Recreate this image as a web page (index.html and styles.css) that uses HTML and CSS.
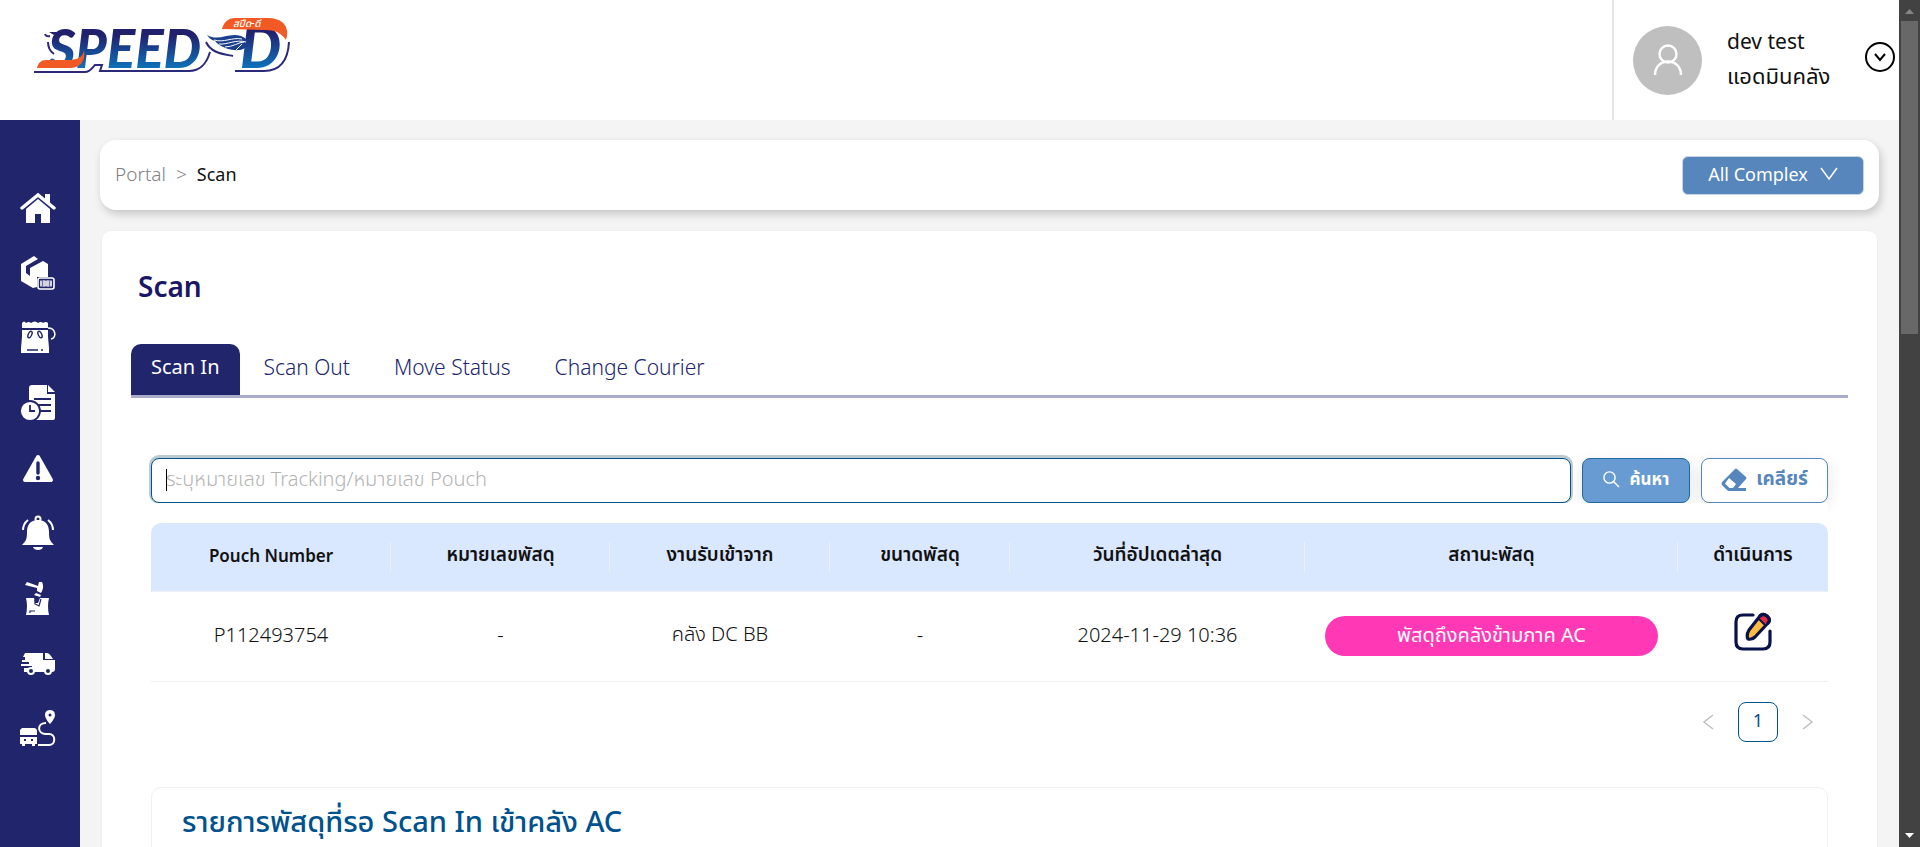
FILE: index.html
```html
<!DOCTYPE html>
<html lang="th">
<head>
<meta charset="utf-8">
<title>Scan</title>
<link rel="stylesheet" href="styles.css">
</head>
<body>
<div class="app">
  <header class="header">
    <a class="logo" href="#" aria-label="Speed-D">
      <svg width="270" height="86" viewBox="0 0 270 86">
        <defs>
          <linearGradient id="blue" x1="0" y1="0" x2="0" y2="1">
            <stop offset="0.3" stop-color="#21206d"/><stop offset="0.85" stop-color="#0e76bd"/>
          </linearGradient>
        </defs>
        <path d="M0 72H40L51 72C56 72 58 68 61 65H68L66 71H155C168 71 173 62 176 52" fill="none" stroke="#2b2a78" stroke-width="2"/>
        <path d="M11 34q1 3 5 2M14 42q0 8 6 12M172 42c5 11 17 12 27 14M201 71H230C246 71 254 60 255 42" fill="none" stroke="#2b2a78" stroke-width="2"/>
        <text class="logo-word" x="14" y="68" fill="url(#blue)">SPEED</text>
        <path d="M15 32h12l-7 3z" fill="#21206d"/>
        <path d="M3 68C4 63 7 60 12 60H34C42 60 49 58 50 50C52 61 46 68 36 68Z" fill="#f15a24"/>
        <text class="logo-word logo-d" x="206" y="68" fill="url(#blue)">D</text>
        <path d="M188 29C190 22 194 18 201 18H234C250 18 256 28 252 40C248 34 242 30 232 30Z" fill="#f15a24"/>
        <path d="M173 35C185 42 194 32 207 36C216 39 216 48 206 50C196 51 186 47 181 41C177 40 175 38 173 35Z" fill="#1b3f8d"/>
        <path d="M180 40C190 43 198 37 208 39M185 44C193 45 202 39 212 42M191 47C199 47 205 42 210 42M202 50l6-6" fill="none" stroke="#fff" stroke-width="1"/>
        <text class="logo-sub" x="199" y="27" fill="#fff">สปีด-ดี</text>
      </svg>
    </a>
    <div class="user">
      <span class="avatar">
        <svg width="32" height="32" viewBox="0 0 32 32" fill="none" stroke="#fff" stroke-width="2.4"><circle cx="16" cy="10" r="8.5"/><path d="M3 31C3 13 29 13 29 31"/></svg>
      </span>
      <div class="user-text"><span>dev test</span><span class="role">แอดมินคลัง</span></div>
      <button class="user-toggle" aria-label="เมนูผู้ใช้">
        <svg width="30" height="30" viewBox="0 0 30 30" fill="none" stroke="#000" stroke-width="2"><circle cx="15" cy="15" r="14"/><path d="M10 12l5 6 5-6"/></svg>
      </button>
    </div>
  </header>
  <div class="body">
    <nav class="sidebar">
      <a href="#" aria-label="Home"><svg width="36" height="36" viewBox="0 0 36 36"><path d="M25 4h5v10l-5-5z" fill="#fff"/><path d="M2 18L18 5l16 13" fill="none" stroke="#fff" stroke-width="3.4" stroke-linecap="round"/><path d="M6 19L18 9l12 10v14h-9v-9h-6v9H6z" fill="#fff"/></svg></a>
      <a href="#" aria-label="Parcel"><svg width="36" height="36" viewBox="0 0 36 36" fill="#fff"><path d="M1 9L14 1l4 3L6 11v7l4 3v-8L23 6l5 3v13H17v10L13 33 1 26z"/><rect x="18" y="23" width="16" height="11" rx="2" fill="none" stroke="#fff" stroke-width="1.6"/><path d="M21 26v5M24 25.500v6M26 26v5M28 25.500v6M31 26v5" stroke="#fff" stroke-width="1.400"/><path d="M20 25h12v7H20z" fill="#fff" opacity=".35"/></svg></a>
      <a href="#" aria-label="Pouch"><svg width="36" height="36" viewBox="0 0 36 36"><path d="M2 3q2-3 4 0 3-2 5 0 4-3 7 0 3-2 5 0 3-2 5 0v5H2zM2 10h26v7l1 11v5H1v-5l1-11z" fill="#fff"/><path d="M28 8c8 0 9 10 3 11" fill="none" stroke="#fff" stroke-width="1.600"/><g fill="none" stroke="#21266c" stroke-width="1.400"><ellipse cx="10" cy="14.500" rx="1.700" ry="3.500" transform="rotate(25 10 14.500)"/><ellipse cx="20" cy="14.500" rx="1.700" ry="3.500" transform="rotate(-25 20 14.500)"/><path d="M7 30h11M21 30h2"/></g></svg></a>
      <a href="#" aria-label="History"><svg width="36" height="36" viewBox="0 0 36 36"><path d="M12 0h15v9h8v24q0 2-2 2H9V3q0-3 3-3zM28 0l7 7h-7z" fill="#fff"/><path d="M14 14h17M17 20h14M17 26h14" stroke="#21266c" stroke-width="1.800"/><circle cx="10" cy="26" r="10" fill="#fff" stroke="#21266c" stroke-width="1.800"/><path d="M10 20v6h5" fill="none" stroke="#21266c" stroke-width="1.800"/></svg></a>
      <a href="#" aria-label="Warning"><svg width="36" height="36" viewBox="0 0 36 36"><path d="M18 7l13 23H5z" fill="#fff" stroke="#fff" stroke-width="4" stroke-linejoin="round"/><path d="M18 13v10" stroke="#21266c" stroke-width="3.400" stroke-linecap="round"/><circle cx="18" cy="28" r="2.200" fill="#21266c"/></svg></a>
      <a href="#" aria-label="Notifications"><svg width="36" height="36" viewBox="0 0 36 36"><circle cx="18" cy="4" r="2.500" fill="none" stroke="#fff" stroke-width="2"/><path d="M18 5c8 0 11 5 11 12 0 7 1 9 5 13H2c4-4 5-6 5-13C7 10 10 5 18 5zM13 32h10q-1 3-5 3t-5-3z" fill="#fff"/><path d="M8 5q-5 4-5 10M28 5q5 4 5 10" fill="none" stroke="#fff" stroke-width="2"/></svg></a>
      <a href="#" aria-label="Damaged parcel"><svg width="36" height="36" viewBox="0 0 36 36" fill="#fff"><path d="M7 2l11 4 1-4 3 0c2 4 1 8-1 11l-4-2 0-3L5 5zM16 13l5 2-1 2-6-2zM6 18h8l1 5h3l2-5h9q-2 8 0 17H6q2-9 0-17z"/><path d="M15 20v4l4 2 2-7M10 33v-2h5" fill="none" stroke="#21266c" stroke-width="1.200"/></svg></a>
      <a href="#" aria-label="Delivery"><svg width="36" height="36" viewBox="0 0 36 36"><path d="M5 8h18v7h12v9q0 3-3 3H4v-4h8v-2H1v-2h8v-2H2v-2h3V12H3zM25 8h2q2 0 4 3l2 3h-8z" fill="#fff"/><circle cx="11" cy="26" r="3" fill="#21266c" stroke="#fff" stroke-width="2"/><circle cx="28" cy="26" r="3" fill="#21266c" stroke="#fff" stroke-width="2"/></svg></a>
      <a href="#" aria-label="Routes"><svg width="36" height="36" viewBox="0 0 36 36"><path d="M30 0c4 0 5 3 5 5 0 4-5 9-5 9s-5-5-5-9c0-2 1-5 5-5zM2 18h13l2 2v5H0v-5zM0 27h17v7h-2v2h-3v-2H5v2H2v-2H0z" fill="#fff"/><circle cx="30" cy="5" r="1.500" fill="#21266c"/><path d="M4 30h2M11 30h2" stroke="#21266c" stroke-width="2"/><path d="M26 13c-9 0-9 10-1 11h4c7 0 7 11 0 11H18" fill="none" stroke="#fff" stroke-width="2"/></svg></a>
    </nav>
    <main class="content">
      <section class="topbar">
        <nav class="crumbs" aria-label="Breadcrumb"><a href="#">Portal</a><span>&gt;</span><span class="current">Scan</span></nav>
        <button class="complex">All Complex
          <svg width="18" height="14" viewBox="0 0 18 14" fill="none" stroke="#fff" stroke-width="1.500"><path d="M1 1l8 11 8-11"/></svg>
        </button>
      </section>
      <section class="panel">
        <h1>Scan</h1>
        <div class="tabs" role="tablist">
          <button class="tab active" role="tab" aria-selected="true">Scan In</button>
          <button class="tab" role="tab">Scan Out</button>
          <button class="tab" role="tab">Move Status</button>
          <button class="tab" role="tab">Change Courier</button>
        </div>
        <div class="pane">
          <form class="search">
            <div class="field"><input type="text" aria-label="ระบุหมายเลข Tracking/หมายเลข Pouch" placeholder="ระบุหมายเลข Tracking/หมายเลข Pouch"></div>
            <button class="btn primary" type="button">
              <svg width="17" height="17" viewBox="0 0 17 17" fill="none" stroke="#fff" stroke-width="1.400"><circle cx="6.500" cy="6.500" r="5.600"/><path d="M10.500 10.500L16 16"/></svg>
              ค้นหา</button>
            <button class="btn clear" type="reset">
              <svg width="26" height="24" viewBox="0 0 26 24"><path d="M14 1q1-1 2 0l9 8q1 1 0 2L17 20h8v3H8q-1 0-2-1L1 17q-1-1 0-3zM8 10l-4 5.500L8.500 20H12l3-4z" fill="#5686bc" fill-rule="evenodd"/></svg>
              เคลียร์</button>
          </form>
          <div class="table-wrap">
            <table>
              <colgroup><col class="c1"><col class="c2"><col class="c3"><col class="c4"><col class="c5"><col class="c6"><col class="c7"></colgroup>
              <thead><tr><th class="latin">Pouch Number</th><th>หมายเลขพัสดุ</th><th>งานรับเข้าจาก</th><th>ขนาดพัสดุ</th><th>วันที่อัปเดตล่าสุด</th><th>สถานะพัสดุ</th><th>ดำเนินการ</th></tr></thead>
              <tbody><tr><td>P112493754</td><td>-</td><td>คลัง DC BB</td><td>-</td><td>2024-11-29 10:36</td>
                <td><span class="pill">พัสดุถึงคลังข้ามภาค AC</span></td>
                <td><button class="edit" aria-label="แก้ไข"><svg width="40" height="40" viewBox="0 0 40 40" fill="none" stroke="#07114a" stroke-width="3.200" stroke-linecap="round"><path d="M20 4H10Q3 4 3 11V31Q3 38 10 38H30Q37 38 37 31V20"/><path d="M27 5q3-3 7 0 4 4 1 7L22 26q-3 3-7 2-2-4 1-9z" fill="#fdbb3f" stroke-linejoin="round"/><path d="M28 6q3-2 5 0 3 3 1 6l-2 2-6-6z" fill="#ea2b3d" stroke="none"/><path d="M26 8l6 6" stroke-width="2"/><path d="M27 5q3-3 7 0 4 4 1 7" /></svg></button></td></tr></tbody>
            </table>
          </div>
          <nav class="pager" aria-label="Pagination">
            <button aria-label="Previous"><svg width="12" height="18" viewBox="0 0 12 18"><path d="M11 2L2 9l9 7"/></svg></button>
            <button class="page">1</button>
            <button aria-label="Next"><svg width="12" height="18" viewBox="0 0 12 18"><path d="M1 2l9 7-9 7"/></svg></button>
          </nav>
          <section class="waiting"><h2>รายการพัสดุที่รอ Scan In เข้าคลัง AC</h2></section>
        </div>
      </section>
    </main>
  </div>
</div>
<div class="scrollbar" aria-hidden="true">
  <svg width="9" height="21" viewBox="0 0 9 21"><path d="M0 14l4.500-5L9 14z" fill="#868686"/></svg>
  <div class="thumb"></div>
  <svg width="9" height="21" viewBox="0 0 9 21"><path d="M0 7h9l-4.500 5z" fill="#fff"/></svg>
</div>
</body>
</html>
```
FILE: styles.css
```css
* { box-sizing: border-box; }
body {
  margin: 0;
  display: flex;
  height: 100vh;
  overflow: hidden;
  background: #f4f4f4;
  color: #111;
  font-family: "Noto Sans", "Noto Sans Thai", sans-serif;
  font-size: 18px;
}
button, input { font: inherit; color: inherit; }
button { cursor: pointer; padding: 0; border: 0; background: none; }
a { color: inherit; text-decoration: none; }
svg { display: block; flex: none; }
.app { flex: 1; min-width: 0; display: flex; flex-direction: column; overflow: hidden; }
.header { height: 120px; flex: none; display: flex; justify-content: space-between; background: #fff; }
.logo { padding-left: 34px; }
.logo-word { font: italic 900 53px Lato, sans-serif; stroke: #fff; stroke-width: 4px; paint-order: stroke; }
.logo-d { font-size: 58px; }
.logo-sub { font: italic 500 10px "Noto Sans", "Noto Sans Thai", sans-serif; }
.user { width: 287px; display: flex; align-items: center; border-left: 2px solid #e4e4ec; padding: 0 4px 0 19px; }
.avatar { width: 69px; height: 69px; display: grid; place-items: center; border-radius: 50%; background: #bfbfbf; }
.user-text { margin: 0 0 4px 25px; flex: 1; display: flex; flex-direction: column; font-size: 21px; line-height: 34px; white-space: nowrap; }
.role { font-size: 22px; }
.user-toggle { margin-bottom: 6px; }
.body { flex: 1; min-height: 0; display: flex; }
.sidebar { width: 80px; flex: none; display: flex; flex-direction: column; gap: 29px; padding: 70px 0 0 20px; background: #21266c; }
.sidebar a { width: 36px; height: 36px; }
.content { flex: 1; min-width: 0; padding: 20px; }
.topbar { height: 70px; display: flex; justify-content: space-between; align-items: center; padding: 0 15px; border-radius: 16px; background: #fff; box-shadow: 2px 4px 8px #00000030; }
.crumbs { display: flex; gap: 10px; padding-bottom: 2px; color: #808080; font-size: 19px; font-weight: 300; }
.crumbs .current { color: #111; font-size: 18px; line-height: 27px; font-weight: 400; }
.complex { height: 39px; width: 182px; display: flex; justify-content: center; align-items: center; gap: 12px; padding-bottom: 2px; border: 1px solid #c8d4e2; border-radius: 6px; background: #5686bc; color: #fff; }
.panel { margin: 20px 1px 0; padding: 32px 29px 0; height: 900px; border: 1px solid #f0f0f0; border-radius: 10px; background: #fff; }
h1 { margin: 0 0 35px 7px; font-size: 28px; line-height: 46px; font-weight: 600; color: #1b1766; }
.tabs { display: flex; border-bottom: 3px solid #aaaacb; color: #21266c; font-size: 21px; font-weight: 300; }
.tab { height: 51px; padding: 0 20px 6px; border-radius: 10px 10px 0 0; }
.tab.active { background: #21266c; color: #fff; font-size: 20px; font-weight: 400; }
.tab + .tab { padding: 0 20px 6px 24px; }
.pane { padding: 60px 20px 0; }
.search { display: flex; gap: 11px; }
.field { flex: 1; position: relative; display: flex; }
.field::before { content: ""; position: absolute; left: 15px; top: 11px; width: 1px; height: 22px; background: #000; }
.field input { flex: 1; height: 45px; padding: 0 14px 4px; border: 1px solid #00528e; border-radius: 8px; outline: 0; background: #fff; box-shadow: 0 -1px 0 2px #bccbd0; font-size: 20px; font-weight: 300; }
.field input::placeholder { color: #b4b4b4; opacity: 1; }
.btn { height: 45px; display: flex; justify-content: center; align-items: center; padding-bottom: 2px; border-radius: 8px; font-weight: 700; white-space: nowrap; box-shadow: 0 4px 15px #0000001a; }
.primary { width: 108px; gap: 10px; border: 1px solid #1d69a3; background: #689bd1; color: #fff; font-size: 17px; }
.clear { width: 127px; gap: 9px; border: 1px solid #5686bc; background: #fff; color: #5686bc; font-size: 19px; }
.table-wrap { position: relative; padding-top: 20px; background: #fff; }
table { width: 100%; table-layout: fixed; border-collapse: separate; border-spacing: 0; text-align: center; }
.c1 { width: 240px; } .c2 { width: 219px; } .c3 { width: 220px; } .c4 { width: 180px; } .c5 { width: 295px; } .c7 { width: 150px; }
th { position: relative; height: 69px; padding: 0 0 4px; background: #d9e7ff; border-bottom: 1px solid #eef0f4; font-size: 19px; font-weight: 600; }
th.latin { font-size: 17px; }
th:first-child { border-top-left-radius: 10px; }
th:last-child { border-top-right-radius: 10px; }
th:not(:last-child)::after { content: ""; position: absolute; right: 0; top: 19px; width: 1px; height: 30px; background: #f0f0f0; }
td { height: 90px; padding: 0 20px 4px; border-bottom: 1px solid #f0f0f0; font-size: 20px; font-weight: 300; }
.pill { display: block; height: 40px; margin-top: 2px; line-height: 38px; border-radius: 20px; background: #ff38b5; color: #fff; font-size: 20px; font-weight: 400; }
.edit { display: inline-block; vertical-align: middle; margin-bottom: 8px; }
.pager { display: flex; justify-content: flex-end; align-items: center; gap: 24px; padding: 20px 14px 0 0; }
.pager path { fill: none; stroke: #bfbfbf; stroke-width: 1.5; }
.pager .page { width: 40px; height: 40px; border: 1px solid #00528e; border-radius: 8px; color: #00528e; padding-bottom: 4px; }
.waiting { margin-top: 45px; height: 200px; padding: 9px 30px; border: 1px solid #f0f0f0; border-radius: 10px; }
h2 { margin: 0; color: #00528e; font-size: 29px; line-height: 48px; font-weight: 500; white-space: nowrap; }
.scrollbar { width: 21px; flex: none; display: flex; flex-direction: column; align-items: center; background: #424242; }
.thumb { width: 17px; height: 37vh; margin-bottom: auto; background: #686868; }
```
